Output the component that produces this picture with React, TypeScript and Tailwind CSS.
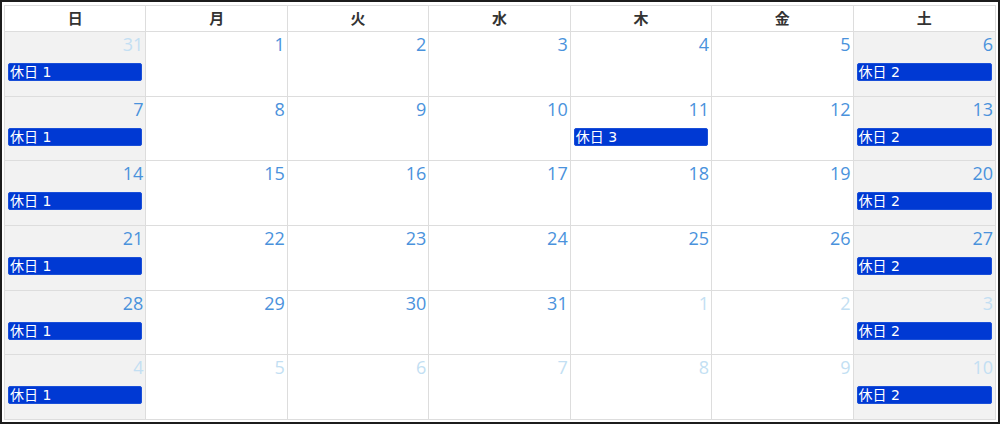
import React from "react";

type Cell = { d: number; other: boolean };

const weeks: Cell[][] = (() => {
  const rows: Cell[][] = [];
  const seq: Cell[] = [];
  seq.push({ d: 31, other: true });
  for (let i = 1; i <= 31; i++) seq.push({ d: i, other: false });
  for (let i = 1; i <= 10; i++) seq.push({ d: i, other: true });
  for (let r = 0; r < 6; r++) rows.push(seq.slice(r * 7, r * 7 + 7));
  return rows;
})();

const heads = ["日", "月", "火", "水", "木", "金", "土"];

export default function App() {
  return (
    <div
      className="w-[1000px] h-[424px] border-2 border-[#1c1c1c] bg-white p-[2px] box-border"
      style={{ fontFamily: '"Open Sans", "Noto Sans CJK JP", sans-serif' }}
    >
      <div className="w-[992px] h-[415px] mt-[1px] border border-[#dddddd] flex flex-col box-border">
        <div className="grid grid-cols-7 h-[26px] border-b border-[#dddddd]">
          {heads.map((h, i) => (
            <div
              key={h}
              className={`flex items-center justify-center text-[15px] font-bold text-[#333333] ${i < 6 ? "border-r border-[#dddddd]" : ""}`}
            >
              {h}
            </div>
          ))}
        </div>
        {weeks.map((w, ri) => (
          <div
            key={ri}
            className={`grid grid-cols-7 flex-1 ${ri < 5 ? "border-b border-[#dddddd]" : ""}`}
          >
            {w.map((c, ci) => {
              const weekend = ci === 0 || ci === 6;
              let ev: string | undefined;
              if (ci === 0) ev = "休日 1";
              if (ci === 6) ev = "休日 2";
              if (ri === 1 && ci === 4) ev = "休日 3";
              return (
                <div
                  key={ci}
                  className={`flex flex-col ${weekend ? "bg-[#f2f2f2]" : "bg-white"} ${ci < 6 ? "border-r border-[#dddddd]" : ""}`}
                >
                  <div
                    className={`text-right pr-[2px] text-[18px] leading-[24px] ${c.other ? "text-[#c3dff3]" : "text-[#4a92dc]"}`}
                  >
                    {c.d}
                  </div>
                  {ev && (
                    <div
                      className="mt-[7px] mx-[3px] h-[18px] rounded-[2px] bg-[#0039d3] border border-[#1a4fd8] text-white text-[14px] leading-[16px] pl-[1px] whitespace-nowrap overflow-hidden"
                      style={{ fontFamily: '"DejaVu Sans", "Noto Sans CJK JP", sans-serif' }}
                    >
                      {ev}
                    </div>
                  )}
                </div>
              );
            })}
          </div>
        ))}
      </div>
    </div>
  );
}
